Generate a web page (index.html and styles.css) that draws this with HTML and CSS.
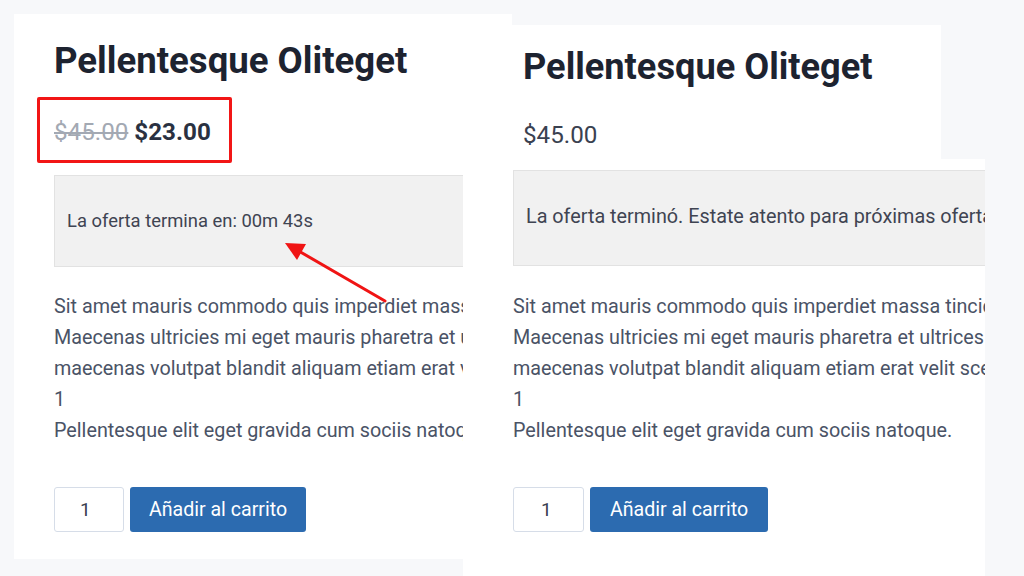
FILE: index.html
```html
<!DOCTYPE html>
<html lang="es">
<head>
<meta charset="utf-8">
<title>Oferta</title>
<link rel="stylesheet" href="styles.css">
</head>
<body>
<div class="canvas">
  <section class="shot shot-left">
    <div class="product">
      <h1 class="title">Pellentesque Oliteget</h1>
      <p class="price"><del class="old">$45.00</del> <ins class="new">$23.00</ins></p>
      <div class="notice">La oferta termina en: 00m 43s</div>
      <div class="desc">
        <p>Sit amet mauris commodo quis imperdiet massa tincidunt nunc pulvinar.</p>
        <p>Maecenas ultricies mi eget mauris pharetra et ultrices neque ornare.</p>
        <p>maecenas volutpat blandit aliquam etiam erat velit scelerisque in.</p>
        <p>1</p>
        <p>Pellentesque elit eget gravida cum sociis natoque.</p>
      </div>
      <form class="cart">
        <span class="qty">1</span>
        <button type="button" class="add">Añadir al carrito</button>
      </form>
    </div>
  </section>

  <section class="shot shot-right">
    <div class="product">
      <h1 class="title">Pellentesque Oliteget</h1>
      <p class="price"><span class="regular">$45.00</span></p>
      <div class="notice">La oferta terminó. Estate atento para próximas ofertas.</div>
      <div class="desc">
        <p>Sit amet mauris commodo quis imperdiet massa tincidunt nunc pulvinar.</p>
        <p>Maecenas ultricies mi eget mauris pharetra et ultrices neque ornare.</p>
        <p>maecenas volutpat blandit aliquam etiam erat velit scelerisque in.</p>
        <p>1</p>
        <p>Pellentesque elit eget gravida cum sociis natoque.</p>
      </div>
      <form class="cart">
        <span class="qty">1</span>
        <button type="button" class="add">Añadir al carrito</button>
      </form>
    </div>
  </section>

  <div class="highlight"></div>
  <svg class="arrow" width="120" height="80" viewBox="0 0 120 80">
    <line x1="110" y1="68" x2="22" y2="17" stroke="#f01414" stroke-width="3" stroke-linecap="round"/>
    <polygon points="10,10 31,11 22,27" fill="#f01414"/>
  </svg>
</div>
</body>
</html>
```

FILE: styles.css
```css
* { box-sizing: border-box; }
html, body { margin: 0; padding: 0; }
body {
  width: 1024px;
  height: 576px;
  overflow: hidden;
  background: #f7f8fa;
  font-family: Roboto, "Liberation Sans", sans-serif;
}
.canvas {
  position: relative;
  width: 1024px;
  height: 576px;
}
.shot {
  position: absolute;
  background: #ffffff;
  overflow: hidden;
}
.shot-left {
  left: 14px;
  top: 14px;
  width: 498px;
  height: 545px;
}
.shot-right {
  left: 463px;
  top: 25px;
  width: 522px;
  height: 551px;
  clip-path: polygon(0 0, 478px 0, 478px 134px, 522px 134px, 522px 551px, 0 551px);
}
.product {
  display: flex;
  flex-direction: column;
  width: 700px;
}
.shot-left .product { padding-left: 40px; }
.shot-right .product { padding-left: 50px; }

.title {
  margin: 25px 0 0;
  font-size: 36.6px;
  line-height: 44px;
  font-weight: 700;
  color: #1d2330;
}
.shot-right .title { margin-left: 10px; margin-top: 20px; font-size: 36.2px; }

.price {
  margin: 33px 0 0;
  font-size: 24.2px;
  line-height: 32px;
  color: #2d3443;
}
.shot-right .price { margin: 30px 0 0 10px; }
.price .old {
  color: #a3a9b3;
  text-decoration: line-through;
  text-decoration-thickness: 1.5px;
}
.price .new {
  text-decoration: none;
  font-weight: 700;
  color: #2a3141;
}
.price .regular { color: #3a4150; }

.notice {
  margin-top: 27px;
  width: 620px;
  height: 92px;
  padding: 33px 12px;
  background: #f1f1f1;
  border: 1px solid #e2e2e2;
  font-size: 18.4px;
  line-height: 24px;
  color: #3f4452;
  white-space: nowrap;
}
.shot-right .notice { margin-top: 19px; height: 96px; padding: 34px 12px; font-size: 19.8px; }

.desc {
  margin-top: 24px;
  font-size: 19.75px;
  line-height: 31px;
  color: #4a5366;
  white-space: nowrap;
}
.shot-right .desc { margin-top: 25px; }
.desc p { margin: 0; }

.cart {
  display: flex;
  gap: 6px;
  margin: 41px 0 0;
}
.qty {
  display: flex;
  align-items: center;
  width: 70px;
  height: 45px;
  padding-left: 25px;
  border: 1px solid #d6dde8;
  border-radius: 3px;
  font-size: 19px;
  color: #3a4150;
}
.shot-right .qty { width: 71px; padding-left: 27px; }
.add {
  height: 45px;
  width: 176px;
  border: 0;
  border-radius: 3px;
  background: #2c6bb0;
  color: #ffffff;
  font-family: inherit;
  font-size: 19.6px;
  padding: 0;
}
.shot-right .add { width: 178px; }

.highlight {
  position: absolute;
  left: 37px;
  top: 97px;
  width: 195px;
  height: 66px;
  border: 3px solid #f21616;
  border-radius: 2px;
}
.arrow {
  position: absolute;
  left: 275px;
  top: 233px;
}
```
